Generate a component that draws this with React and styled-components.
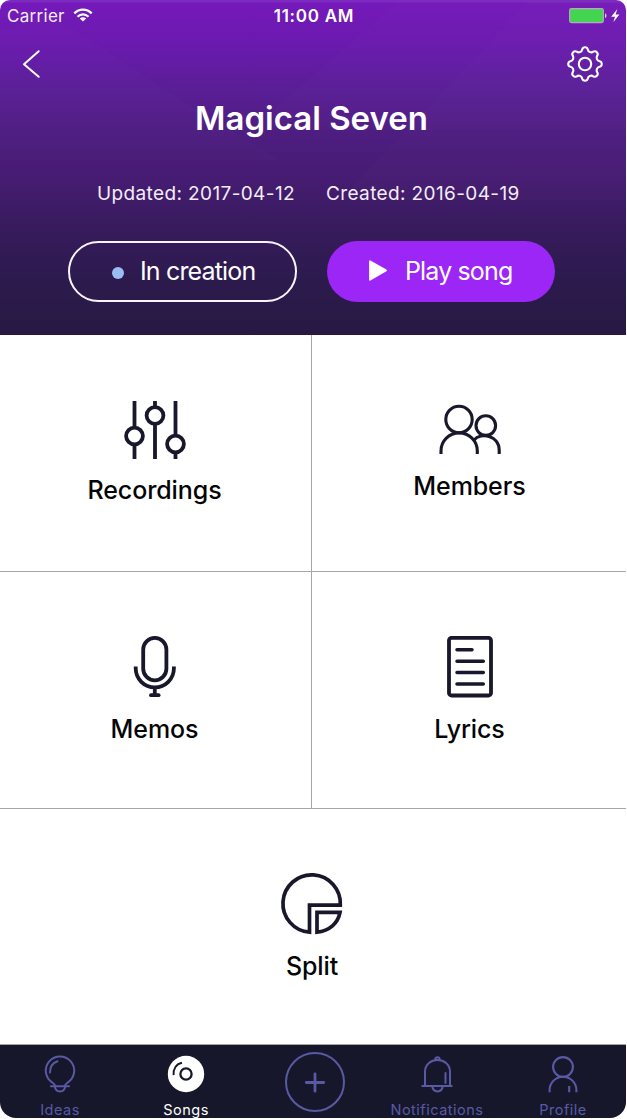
import React from "react";
import styled, { createGlobalStyle } from "styled-components";

const INK = "#18172b";
const MUTED = "#5a59a3";

const GlobalStyle = createGlobalStyle`
  * { box-sizing: border-box; }
  body { margin: 0; background: #fff; font-family: Inter, "Liberation Sans", sans-serif; overflow: hidden; }
  button { font: inherit; color: inherit; background: none; border: 0; padding: 0; }
  h1 { margin: 0; }
  svg { display: block; flex: none; overflow: visible; }
`;

const Screen = styled.div`
  display: flex;
  flex-direction: column;
  width: 626px;
  height: 1118px;
  overflow: hidden;
  border-radius: 10px 10px 16px 16px;
  background: #fff;
`;

const Header = styled.header`
  position: relative;
  isolation: isolate;
  height: 335px;
  color: #fff;
  background: linear-gradient(180deg, #7c2abf 0, #7c2abf 2px, #7519ba 3px, #6a1aae 45px, #5b1e98 85px, #4d1d80 135px, #471c74 175px, #371b5c 230px, #2c1a4d 280px, #271942 334px);
`;

const Facets = styled.svg`
  position: absolute;
  inset: 0;
  z-index: -1;
`;

const StatusBar = styled.div`
  display: grid;
  grid-template-columns: 1fr auto 1fr;
  align-items: center;
  height: 32px;
  padding: 0 5px 0 7px;
`;

const Carrier = styled.div`
  display: flex;
  align-items: center;
  gap: 8px;
  font-size: 17px;
  font-weight: 400;
  letter-spacing: 0.3px;
  color: #f4ecfa;
`;

const Clock = styled.div`
  font-size: 17px;
  font-weight: 600;
  letter-spacing: 0.75px;
`;

const Power = styled.div`
  display: flex;
  justify-content: flex-end;
`;

const TopBar = styled.div`
  display: flex;
  align-items: center;
  justify-content: space-between;
  height: 65px;
  padding: 0 23px 1px 22px;
`;

const Title = styled.h1`
  height: 44px;
  line-height: 43px;
  text-align: center;
  font-size: 33px;
  font-weight: 600;
  padding-right: 3px;
`;

const Dates = styled.div`
  display: flex;
  gap: 31px;
  margin-top: 41px;
  padding-left: 97px;
  height: 24px;
  line-height: 24px;
  font-size: 19px;
  font-weight: 400;
  letter-spacing: 0.38px;
  white-space: nowrap;
  color: #f3edf8;
`;

const Actions = styled.div`
  display: flex;
  gap: 30px;
  margin-top: 35px;
  padding-left: 68px;
`;

const Pill = styled.button`
  display: flex;
  align-items: center;
  width: ${(p) => (p.$filled ? 228 : 229)}px;
  height: 61px;
  padding: 0 0 2px 42px;
  border-radius: 31px;
  border: ${(p) => (p.$filled ? "0" : "2px solid #f7f3fa")};
  background: ${(p) => (p.$filled ? "#9b26f5" : "transparent")};
  font-size: 25px;
  font-weight: 400;
  letter-spacing: -0.85px;
  white-space: nowrap;
`;

const Dot = styled.span`
  width: 12px;
  height: 12px;
  margin: 4px 16px 0 0;
  border-radius: 50%;
  background: #9dbcf3;
`;

const Tiles = styled.main`
  display: grid;
  grid-template-columns: 311px 1fr;
  grid-template-rows: 237px 237px 236px;
`;

const Tile = styled.button`
  display: flex;
  flex-direction: column;
  align-items: center;
  grid-column: ${(p) => (p.$wide ? "1 / -1" : "auto")};
  padding-top: ${(p) => p.$top}px;
  padding-right: ${(p) => p.$shift || 0}px;
  padding-left: ${(p) => (p.$divided ? 1 : 0)}px;
  border-bottom: 1px solid #a6a6a8;
  border-left: ${(p) => (p.$divided ? "1px solid #a6a6a8" : "0")};
`;

const TileLabel = styled.span`
  height: 32px;
  margin-top: ${(p) => p.$gap}px;
  line-height: 32px;
  color: #050506;
  font-size: 25px;
  font-weight: 500;
  letter-spacing: -0.1px;
`;

const TabBar = styled.nav`
  display: grid;
  grid-template-columns: 120px 132px 126px 118px 134px;
  height: 73px;
  background: #16172a;
`;

const Tab = styled.button`
  display: flex;
  flex-direction: column;
  align-items: center;
  padding-top: 10px;
  color: ${(p) => (p.$active ? "#fff" : MUTED)};
`;

const AddTab = styled(Tab)`
  padding-top: 6px;
`;

const TabLabel = styled.span`
  margin-top: 7px;
  line-height: 20px;
  font-size: 14.5px;
  font-weight: 400;
  letter-spacing: 0.5px;
`;

const polar = (r, deg) => {
  const a = (deg * Math.PI) / 180;
  return `${(20 + r * Math.cos(a)).toFixed(2)} ${(20 + r * Math.sin(a)).toFixed(2)}`;
};

const gearPath =
  `M${polar(14.8, -11)}` +
  Array.from({ length: 8 }, (_, i) => {
    const a = i * 45;
    return `A2.9 2.9 0 0 1 ${polar(14.8, a + 11)}A3.5 3.5 0 0 0 ${polar(14.8, a + 34)}`;
  }).join("") +
  "Z";

const WifiIcon = () => (
  <svg width="20" height="16" viewBox="0 1 20 16" fill="none" stroke="#fff" strokeWidth="2.3">
    <path d="M1.3 6.4C6.3 1.4 13.7 1.4 18.7 6.4M4.5 9.8c3.2-3.2 7.8-3.2 11 0" />
    <path d="M10 14.5 6.8 11.6c1.8-1.7 4.6-1.7 6.4 0Z" fill="#fff" stroke="none" />
  </svg>
);

const BatteryIcon = () => (
  <svg width="52" height="16" viewBox="0 0 52 16">
    <rect x=".6" y=".6" width="33.8" height="14" rx="1.8" fill="#43d551" stroke="#b9a6c5" strokeWidth="1.1" />
    <path d="M36 5.3c2 .8 2 4 0 4.8Z" fill="#d9c7ea" />
    <path d="M48.3 1 42.2 8.7h3.8L44.3 14.2 50.4 6.5h-3.8Z" fill="#fff" />
  </svg>
);

const BackIcon = () => (
  <svg width="20" height="30" viewBox="0 0 20 30" fill="none" stroke="#fff" strokeWidth="2" strokeLinecap="round" strokeLinejoin="round">
    <path d="M16.7 2.2 2 15.2l14.7 12.6" />
  </svg>
);

const GearIcon = () => (
  <svg width="36" height="36" viewBox="2 2 36 36" fill="none" stroke="#fff" strokeWidth="2.1" strokeLinejoin="round">
    <path d={gearPath} />
    <circle cx="20" cy="20" r="6.2" />
  </svg>
);

const PlayIcon = () => (
  <svg width="36" height="24" viewBox="0 0 36 24">
    <path d="M1 2.2v18.6L17 11.4Z" fill="#fff" stroke="#fff" strokeWidth="1.8" strokeLinejoin="round" />
  </svg>
);

const MixerIcon = () => (
  <svg width="62" height="58" viewBox="0 0 62 58" fill="none" stroke={INK} strokeWidth="3.8">
    <path d="M10.5 0v26M10.5 45v13M31 0v6M31 24v34M51.5 0v34M51.5 52v6" />
    <circle cx="10.5" cy="35" r="8.4" />
    <circle cx="31" cy="14.5" r="8.4" />
    <circle cx="51.5" cy="43" r="8.4" />
  </svg>
);

const MembersIcon = () => (
  <svg width="62" height="50" viewBox="0 0 62 50" fill="none" stroke={INK} strokeWidth="3.1">
    <circle cx="20" cy="14.5" r="13.2" />
    <circle cx="46.8" cy="20.6" r="9.8" />
    <path d="M2 49V46a18 18 0 0 1 36.3 0V49M34.8 35.3C42 26.6 60.2 30.5 60.2 45V49" />
  </svg>
);

const MicIcon = () => (
  <svg width="42" height="62" viewBox="0 0 42 62" fill="none" stroke={INK} strokeWidth="3.8">
    <rect x="9.2" y="1.9" width="23.2" height="42.4" rx="11.6" />
    <path d="M1.7 30.5V32.3a19.1 19.1 0 0 0 38.2 0v-1.8M20.8 51v7" />
    <path d="M17 59.2h7.6" strokeLinecap="round" />
  </svg>
);

const LyricsIcon = () => (
  <svg width="46" height="62" viewBox="0 0 46 62" fill="none" stroke={INK} strokeWidth="3.8" strokeLinecap="round">
    <rect x="2" y="1.9" width="42" height="57.6" rx="2.6" />
    <path d="M10 13.7h15M10 25.2h26.3M10 36.6h26.3M10 48h26.3" strokeWidth="3.5" />
  </svg>
);

const SplitIcon = () => (
  <svg width="62" height="62" viewBox="0 0 62 62" fill="none" stroke={INK} strokeWidth="3.7">
    <path d="M59.3 32.2A28.7 28.7 0 1 0 28.5 59.2V32.2Z" />
    <path d="M36 39.4H59C57 50.2 48.5 57.9 36 59.2Z" />
  </svg>
);

const BulbIcon = () => (
  <svg width="32" height="38" viewBox="0 0 32 38" fill="none" stroke={MUTED} strokeWidth="2" strokeLinecap="round">
    <path d="M11 30.8c0-1.6-.9-2.1-2.6-3.2A14.2 14.2 0 1 1 23.6 27.6c-1.7 1.1-2.6 1.6-2.6 3.2" />
    <path d="M7 31.3h18M10.8 31.6c1 6.4 9.4 6.4 10.4 0M6 17.5c0-5.5 3-9.8 7.5-11.3" />
  </svg>
);

const DiscIcon = () => (
  <svg width="38" height="38" viewBox="0 0 38 38" fill="none" stroke="#16172a" strokeWidth="2">
    <circle cx="19" cy="19" r="18.2" fill="#fff" stroke="none" />
    <circle cx="19" cy="19" r="5.6" strokeWidth="2.3" />
    <path d="M6.6 20.2C6 13.8 9.3 8.8 15 7.7" strokeWidth="1.9" />
  </svg>
);

const AddIcon = () => (
  <svg width="62" height="62" viewBox="0 0 62 62" fill="none" stroke={MUTED} strokeWidth="2" strokeLinecap="round">
    <circle cx="31" cy="31" r="29" />
    <path d="M31 22.8v17.4M22.3 31.5h17.4" strokeWidth="2.8" />
  </svg>
);

const BellIcon = () => (
  <svg width="32" height="38" viewBox="0 0 32 38" fill="none" stroke={MUTED} strokeWidth="2" strokeLinecap="round">
    <path d="M1.3 31h29.4M4 30.5V17C4 1 29 1 29 17V30.5M14.2 4.4c.4-2.9 4.2-2.9 4.6 0M11.3 31.5c1 6.5 9.4 6.5 10.4 0M24.5 18v10" />
  </svg>
);

const ProfileIcon = () => (
  <svg width="30" height="38" viewBox="0 0 30 38" fill="none" stroke={MUTED} strokeWidth="2.1">
    <circle cx="15" cy="12" r="9.9" />
    <path d="M1.6 37.3v-2.2a13.4 13.4 0 0 1 26.8 0V37.3M21.2 31v6.3" />
  </svg>
);

const tiles = [
  { label: "Recordings", Icon: MixerIcon, top: 66, gap: 15, shift: 2 },
  { label: "Members", Icon: MembersIcon, top: 70, gap: 15, divided: true },
  { label: "Memos", Icon: MicIcon, top: 64, gap: 15, shift: 2 },
  { label: "Lyrics", Icon: LyricsIcon, top: 64, gap: 15, divided: true },
  { label: "Split", Icon: SplitIcon, top: 64, gap: 15, wide: true, shift: 2 },
];

export default function App() {
  return (
    <>
      <GlobalStyle />
      <Screen>
        <Header>
          <Facets width="626" height="334" viewBox="0 0 626 334" fill="#fff" aria-hidden="true">
            <path d="M0 30 50 14 190 106 280 160 0 160Z" fillOpacity=".01" />
            <path d="M400 0H626V130H250Z" fillOpacity=".012" />
            <path d="M530 0H626V200H340Z" fillOpacity=".01" />
          </Facets>
          <StatusBar>
            <Carrier>Carrier <WifiIcon /></Carrier>
            <Clock>11:00 AM</Clock>
            <Power><BatteryIcon /></Power>
          </StatusBar>
          <TopBar>
            <BackIcon />
            <GearIcon />
          </TopBar>
          <Title>Magical Seven</Title>
          <Dates>
            <span>Updated: 2017-04-12</span>
            <span>Created: 2016-04-19</span>
          </Dates>
          <Actions>
            <Pill><Dot />In creation</Pill>
            <Pill $filled><PlayIcon />Play song</Pill>
          </Actions>
        </Header>
        <Tiles>
          {tiles.map(({ label, Icon, top, gap, shift, divided, wide }) => (
            <Tile key={label} $top={top} $shift={shift} $divided={divided} $wide={wide}>
              <Icon />
              <TileLabel $gap={gap}>{label}</TileLabel>
            </Tile>
          ))}
        </Tiles>
        <TabBar>
          <Tab><BulbIcon /><TabLabel>Ideas</TabLabel></Tab>
          <Tab $active><DiscIcon /><TabLabel>Songs</TabLabel></Tab>
          <AddTab aria-label="Add"><AddIcon /></AddTab>
          <Tab><BellIcon /><TabLabel>Notifications</TabLabel></Tab>
          <Tab><ProfileIcon /><TabLabel>Profile</TabLabel></Tab>
        </TabBar>
      </Screen>
    </>
  );
}
